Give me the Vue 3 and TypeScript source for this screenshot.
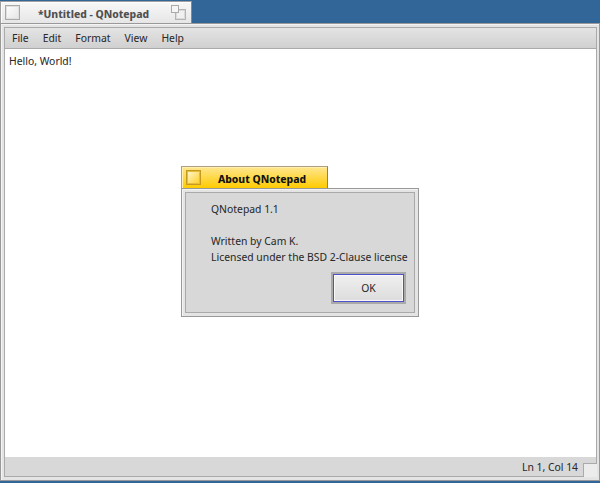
<script setup lang="ts">
import { ref, computed } from 'vue'

const menus: string[] = ['File', 'Edit', 'Format', 'View', 'Help']
const text = ref<string>('Hello, World!')
const caret = ref<number>(text.value.length)
const aboutOpen = ref<boolean>(true)

const position = computed<string>(() => {
  const lines = text.value.slice(0, caret.value).split('\n')
  return `Ln ${lines.length}, Col ${lines[lines.length - 1].length + 1}`
})

function trackCaret(event: Event): void {
  caret.value = (event.target as HTMLTextAreaElement).selectionStart
}
</script>

<template>
  <div class="desktop">
    <main class="window">
      <header class="tab">
        <button class="close" type="button" aria-label="Close"></button>
        <h1 class="title">*Untitled - QNotepad</h1>
        <button class="zoom" type="button" aria-label="Zoom">
          <svg width="16" height="16" viewBox="0 0 16 16">
            <rect x="4.5" y="4.5" width="10" height="10" fill="#f0f0f0" stroke="#b4b4b4" />
            <rect x="5.5" y="5.5" width="8" height="8" fill="none" stroke="#dadada" />
            <rect x="0.5" y="0.5" width="7" height="7" fill="#f5f5f5" stroke="#aaa" />
          </svg>
        </button>
      </header>
      <div class="frame">
        <div class="content">
          <nav class="menubar">
            <button v-for="menu in menus" :key="menu" class="menu" type="button"
              @click="menu === 'Help' && (aboutOpen = true)">{{ menu }}</button>
          </nav>
          <textarea v-model="text" class="editor" aria-label="Document" spellcheck="false"
            @input="trackCaret" @keyup="trackCaret" @click="trackCaret"></textarea>
          <footer class="status">
            <span>{{ position }}</span>
            <span class="grip"></span>
          </footer>
        </div>
      </div>
    </main>

    <div v-if="aboutOpen" class="overlay">
      <section class="dialog" role="dialog" aria-labelledby="about-title">
        <header class="tab active">
          <button class="close" type="button" aria-label="Close" @click="aboutOpen = false"></button>
          <h2 id="about-title" class="title">About QNotepad</h2>
        </header>
        <div class="frame">
          <div class="about">
            <p>QNotepad 1.1</p>
            <p class="credits">Written by Cam K.<br />Licensed under the BSD 2-Clause license</p>
            <button class="ok" type="button" @click="aboutOpen = false">OK</button>
          </div>
        </div>
      </section>
    </div>
  </div>
</template>

<style>
body {
  background: #336698;
}
</style>

<style scoped>
* {
  box-sizing: border-box;
}

.desktop {
  position: relative;
  display: flex;
  min-height: 100vh;
  padding: 1px 0 2px;
  background: #336698;
  color: #2a2a2a;
  font: 11px/16px "Noto Sans Display", "Noto Sans", sans-serif;
}

button {
  padding: 0;
  border: 0;
  background: none;
  color: inherit;
  font: inherit;
}

.window {
  flex: 1;
  display: flex;
  flex-direction: column;
}

.tab {
  display: flex;
  align-items: center;
  align-self: flex-start;
  width: 192px;
  height: 22px;
  padding: 0 4px;
  border: 1px solid #a0a0a0;
  border-right-color: #888;
  border-bottom: 0;
  background: linear-gradient(#f8f8f8, #e6e6e6);
  box-shadow: inset 1px 1px #fff;
  color: #505050;
}

.title {
  flex: 1;
  margin: 0;
  padding: 2px 4px 0 0;
  font-size: 11px;
  line-height: 16px;
  font-weight: 700;
  text-align: center;
  white-space: nowrap;
}

.close {
  width: 15px;
  height: 15px;
  border: 1px solid #aaa;
  background: linear-gradient(135deg, #fff, #e4e4e4);
  box-shadow: inset 0 0 0 1px #e0e0e0;
}

.zoom {
  width: 16px;
  height: 16px;
}

.zoom svg {
  display: block;
}

.frame {
  flex: 1;
  display: flex;
  padding: 3px;
  border: 1px solid #999;
  background: #e4e4e4;
  box-shadow: inset 1px 1px #f4f4f4;
}

.window .frame {
  padding-right: 2px;
}

.content {
  flex: 1;
  display: flex;
  flex-direction: column;
  border: 1px solid #aaa;
  background: #d8d8d8;
}

.menubar {
  display: flex;
  gap: 14px;
  height: 21px;
  padding: 0 7px;
  border-bottom: 1px solid #aaa;
  background: linear-gradient(#e4e4e4, #d0d0d0);
}

.editor {
  flex: 1;
  display: block;
  width: 100%;
  padding: 4px;
  border: 0;
  outline: 0;
  resize: none;
  background: #fff;
  color: inherit;
  font: inherit;
}

.status {
  display: flex;
  justify-content: flex-end;
  gap: 5px;
  height: 19px;
  line-height: 20px;
}

.grip {
  align-self: flex-end;
  width: 14px;
  height: 14px;
  margin: 0 -1px -1px 0;
  border: 1px solid #aaa;
  border-width: 1px 0 0 1px;
  background: #ececec;
}

.overlay {
  position: absolute;
  inset: 0;
  display: grid;
  place-items: center;
}

.dialog {
  display: flex;
  flex-direction: column;
  width: 238px;
}

.tab.active {
  width: 147px;
  border-color: #b0a080;
  border-right-color: #a08030;
  background: linear-gradient(#ffe690, #ffcb00);
  box-shadow: inset 1px 1px #fff0b0;
  color: #111;
}

.active .title {
  padding: 2px 0 0;
}

.active .close {
  border-color: #c49a20;
  background: linear-gradient(135deg, #fff8d8, #ffcf20);
  box-shadow: inset 0 0 0 1px #e8bc38;
}

.about {
  flex: 1;
  display: flex;
  flex-direction: column;
  min-width: 0;
  padding: 8px 8px 8px 25px;
  border: 1px solid #aaa;
  background: #d8d8d8;
}

.about p {
  margin: 0;
  white-space: nowrap;
}

.about .credits {
  margin: 16px 0 7px;
}

.ok {
  align-self: flex-end;
  width: 75px;
  height: 32px;
  border: 2px solid #aaa;
  background: linear-gradient(#f0f0f0, #dcdcdc) padding-box;
  box-shadow: inset 0 0 0 1px #5050c8, inset 0 0 0 2px #f8f8f8;
}
</style>
